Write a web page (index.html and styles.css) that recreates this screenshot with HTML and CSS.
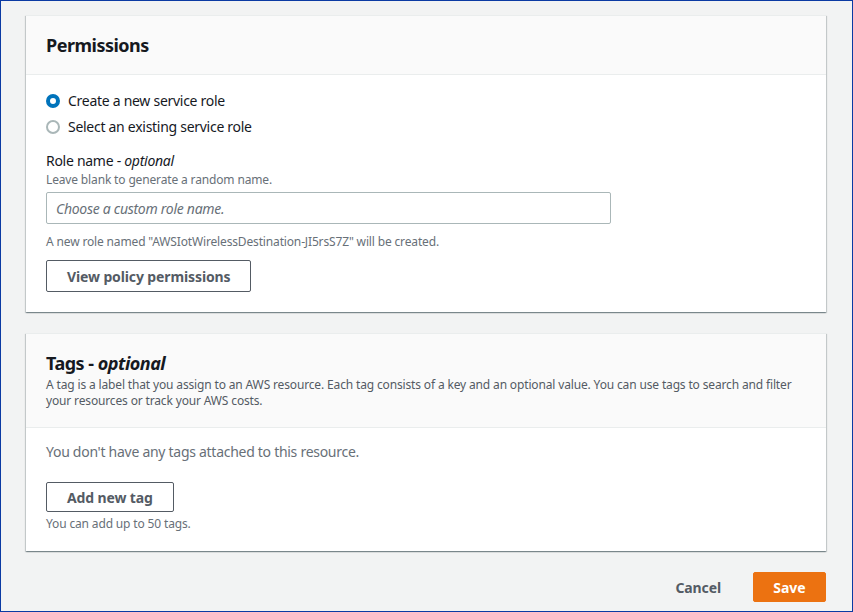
FILE: index.html
```html
<!DOCTYPE html>
<html>
<head>
<meta charset="utf-8">
<link rel="stylesheet" href="styles.css">
</head>
<body>
<div class="frame">
  <section class="card">
    <header class="card-header">
      <h2 class="title">Permissions</h2>
    </header>
    <div class="card-body perm-body">
      <div class="radio-group">
        <label class="radio-row">
          <svg class="radio" width="14" height="14" viewBox="0 0 14 14"><circle cx="7" cy="7" r="5" fill="#fff" stroke="#0073bb" stroke-width="4"/></svg>
          <span>Create a new service role</span>
        </label>
        <label class="radio-row">
          <svg class="radio" width="14" height="14" viewBox="0 0 14 14"><circle cx="7" cy="7" r="6" fill="#fff" stroke="#aab7b8" stroke-width="2"/></svg>
          <span>Select an existing service role</span>
        </label>
      </div>
      <div class="field">
        <div class="field-label">Role name - <i>optional</i></div>
        <div class="field-desc">Leave blank to generate a random name.</div>
        <div class="input"><span class="placeholder">Choose a custom role name.</span></div>
        <div class="field-hint">A new role named "AWSIotWirelessDestination-JI5rsS7Z" will be created.</div>
      </div>
      <button class="btn">View policy permissions</button>
    </div>
  </section>

  <section class="card">
    <header class="card-header tags-header">
      <h2 class="title">Tags - <i>optional</i></h2>
      <p class="header-desc">A tag is a label that you assign to an AWS resource. Each tag consists of a key and an optional value. You can use tags to search and filter your resources or track your AWS costs.</p>
    </header>
    <div class="card-body tags-body">
      <div class="empty">You don't have any tags attached to this resource.</div>
      <button class="btn btn-sm">Add new tag</button>
      <div class="field-hint tag-hint">You can add up to 50 tags.</div>
    </div>
  </section>

  <footer class="actions">
    <button class="link-btn">Cancel</button>
    <button class="primary-btn">Save</button>
  </footer>
</div>
</body>
</html>
```

FILE: styles.css
```css
* { box-sizing: border-box; }
html, body { margin: 0; padding: 0; }
body {
  font-family: "Noto Sans", "Open Sans", Arial, sans-serif;
  color: #16191f;
  background: #f2f3f3;
}
.frame {
  width: 853px;
  height: 612px;
  border: 1px solid #0b3aa3;
  background: #f2f3f3;
  padding: 14px 26px 0 25px;
  display: flex;
  flex-direction: column;
}
.card {
  background: #fff;
  box-shadow: 0 1px 1px 0 rgba(0,28,36,.3), 1px 1px 1px 0 rgba(0,28,36,.15), -1px 1px 1px 0 rgba(0,28,36,.15);
  border-top: 1px solid #eaeded;
}
.card + .card { margin-top: 21px; }
.card-header {
  background: #fafafa;
  border-bottom: 1px solid #eaeded;
  padding: 18px 20px 18px;
}
.title {
  margin: 0;
  font-size: 18px;
  line-height: 22px;
  font-weight: 700;
  letter-spacing: -0.5px;
}
.title i { font-weight: 700; }
.card-body { padding: 15px 20px 20px; }
.radio-group { display: flex; flex-direction: column; gap: 4px; }
.radio-row {
  display: flex;
  align-items: center;
  gap: 8px;
  font-size: 14px;
  line-height: 22px;
  letter-spacing: -0.28px;
}
.radio { flex: none; }
.field { margin-top: 12px; }
.field-label { font-size: 14px; line-height: 22px; letter-spacing: -0.28px; }
.field-desc { font-size: 12px; line-height: 16px; color: #687078; letter-spacing: -0.15px; }
.input {
  margin-top: 4px;
  width: 565px;
  height: 32px;
  border: 1px solid #aab7b8;
  border-radius: 2px;
  padding: 0 9px;
  display: flex;
  align-items: center;
  font-size: 14px;
  letter-spacing: -0.28px;
}
.placeholder { color: #687078; font-style: italic; }
.field-hint { margin-top: 10px; font-size: 12px; line-height: 16px; color: #687078; letter-spacing: -0.15px; }
.btn {
  margin-top: 10px;
  height: 32px;
  padding: 0 20px;
  border: 1px solid #545b64;
  border-radius: 2px;
  background: #fff;
  color: #545b64;
  font-family: inherit;
  font-size: 14px;
  font-weight: 700;
  letter-spacing: -0.12px;
  display: block;
}
.tags-header { padding: 18px 20px 18px; }
.header-desc {
  margin: 3px 0 0;
  font-size: 12px;
  line-height: 16px;
  color: #545b64;
  letter-spacing: -0.15px;
}
.tags-body { padding: 13px 20px 19px; }
.empty { font-size: 14px; line-height: 22px; color: #687078; letter-spacing: -0.28px; }
.btn-sm { margin-top: 19px; height: 30px; }
.tag-hint { margin-top: 4px; }
.actions {
  margin-top: 21px;
  display: flex;
  justify-content: flex-end;
  align-items: center;
  gap: 12px;
}
.link-btn {
  background: none;
  border: none;
  padding: 0 20px;
  height: 30px;
  font-family: inherit;
  font-size: 14px;
  font-weight: 700;
  letter-spacing: -0.12px;
  color: #545b64;
}
.primary-btn {
  width: 73px;
  height: 30px;
  border: 1px solid #ec7211;
  border-radius: 2px;
  background: #ec7211;
  color: #fff;
  font-family: inherit;
  font-size: 14px;
  font-weight: 700;
}
```
